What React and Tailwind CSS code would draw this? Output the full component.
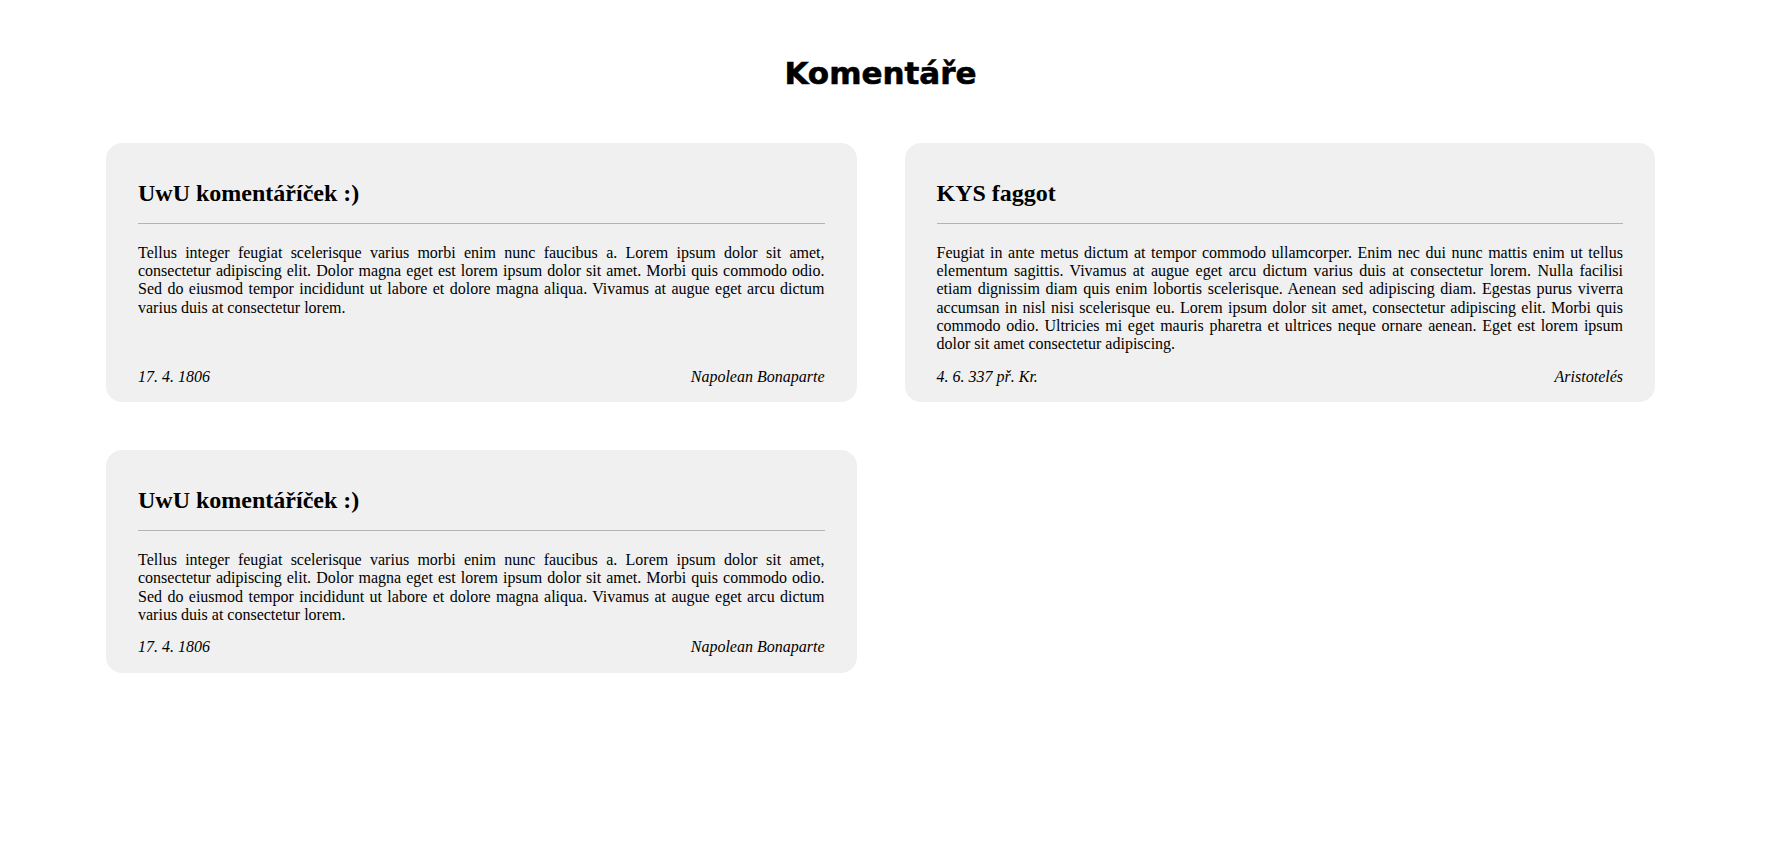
import React from "react";

const comments = [
  {
    title: "UwU komentáříček :)",
    text: "Tellus integer feugiat scelerisque varius morbi enim nunc faucibus a. Lorem ipsum dolor sit amet, consectetur adipiscing elit. Dolor magna eget est lorem ipsum dolor sit amet. Morbi quis commodo odio. Sed do eiusmod tempor incididunt ut labore et dolore magna aliqua. Vivamus at augue eget arcu dictum varius duis at consectetur lorem.",
    date: "17. 4. 1806",
    author: "Napolean Bonaparte",
  },
  {
    title: "KYS faggot",
    text: "Feugiat in ante metus dictum at tempor commodo ullamcorper. Enim nec dui nunc mattis enim ut tellus elementum sagittis. Vivamus at augue eget arcu dictum varius duis at consectetur lorem. Nulla facilisi etiam dignissim diam quis enim lobortis scelerisque. Aenean sed adipiscing diam. Egestas purus viverra accumsan in nisl nisi scelerisque eu. Lorem ipsum dolor sit amet, consectetur adipiscing elit. Morbi quis commodo odio. Ultricies mi eget mauris pharetra et ultrices neque ornare aenean. Eget est lorem ipsum dolor sit amet consectetur adipiscing.",
    date: "4. 6. 337 př. Kr.",
    author: "Aristotelés",
  },
  {
    title: "UwU komentáříček :)",
    text: "Tellus integer feugiat scelerisque varius morbi enim nunc faucibus a. Lorem ipsum dolor sit amet, consectetur adipiscing elit. Dolor magna eget est lorem ipsum dolor sit amet. Morbi quis commodo odio. Sed do eiusmod tempor incididunt ut labore et dolore magna aliqua. Vivamus at augue eget arcu dictum varius duis at consectetur lorem.",
    date: "17. 4. 1806",
    author: "Napolean Bonaparte",
  },
];

function Card({ c }) {
  return (
    <div className="flex flex-col rounded-2xl bg-[#f0f0f0] px-8 pt-4 pb-4">
      <h2 className="mt-[21px] mb-[15px] text-[24px] font-bold leading-[1.149]">{c.title}</h2>
      <hr className="border-t border-[#b4b4b4]" />
      <p className="mt-[20px] mb-[14px] text-justify text-[16px] leading-[1.149]">{c.text}</p>
      <div className="mt-auto flex justify-between text-[16px] italic leading-[1.149]">
        <span>{c.date}</span>
        <span>{c.author}</span>
      </div>
    </div>
  );
}

export default function App() {
  return (
    <div
      className="min-h-screen bg-white text-black"
      style={{ fontFamily: '"Liberation Serif", "Times New Roman", serif' }}
    >
      <div className="pl-[106px] pr-[132px] pt-[55px] pb-16">
        <h1
          className="text-center text-[31px] font-bold leading-[36px] [-webkit-text-stroke:0.6px_black]"
          style={{ fontFamily: '"DejaVu Sans", sans-serif' }}
        >
          Komentáře
        </h1>
        <div className="mt-[52px] grid grid-cols-2 gap-[48px]">
          {comments.map((c, i) => (
            <Card key={i} c={c} />
          ))}
        </div>
      </div>
    </div>
  );
}
